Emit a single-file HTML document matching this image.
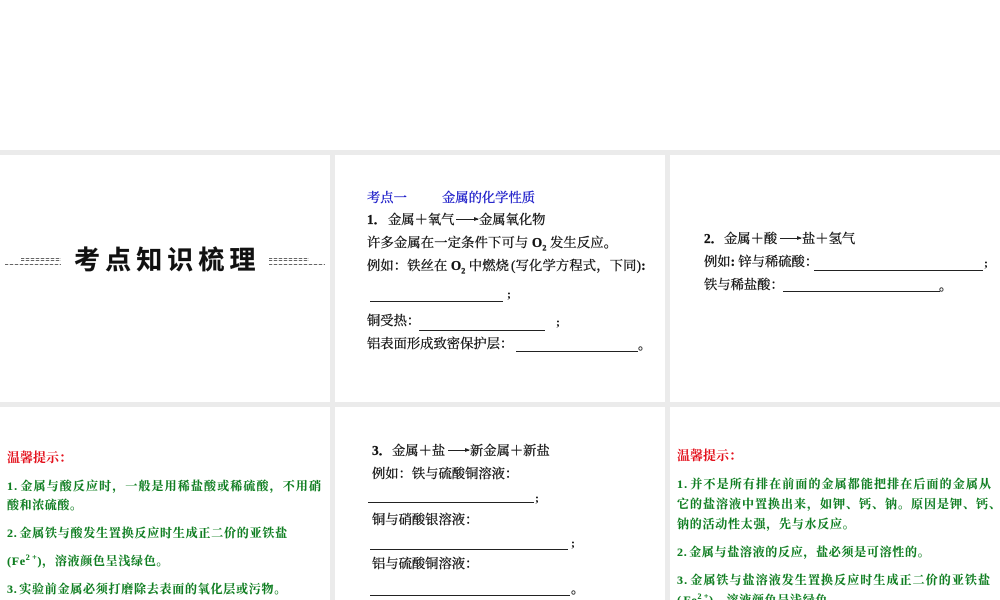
<!DOCTYPE html>
<html lang="zh"><head><meta charset="utf-8">
<style>
html,body{margin:0;padding:0;background:#fff}
#p{position:relative;width:1000px;height:600px;overflow:hidden;background:#fff;font-family:"Liberation Serif","Noto Serif CJK SC",serif;color:#111}
.g{position:absolute;background:#ebebeb}
.t{position:absolute;white-space:nowrap;font-size:13.3px;line-height:18px;height:18px;-webkit-text-stroke:.3px currentColor;margin-top:1px}
.u{position:absolute;height:1px;background:#222}
.a{position:absolute;height:1px;background:#222}
.a:after{content:"";position:absolute;right:-1px;top:-2px;border-left:5px solid #222;border-top:2.5px solid transparent;border-bottom:2.5px solid transparent}
.s{font-weight:bold;font-size:12px;-webkit-text-stroke:0}
.gr{color:#0e7d20;font-weight:bold;font-size:12px;word-spacing:-2px;-webkit-text-stroke:.1px currentColor;margin-top:0}
.r{color:#e3111c;font-weight:bold;font-size:13px;-webkit-text-stroke:0;margin-top:0}
.d{position:absolute;height:1px;background:repeating-linear-gradient(90deg,#666 0 3px,#ddd 3px 5px)}
sub,sup{font-size:8px;line-height:0}
</style></head><body><div id="p">
<div class="g" style="left:0;top:150px;width:1000px;height:5px"></div>
<div class="g" style="left:0;top:402px;width:1000px;height:5px"></div>
<div class="g" style="left:330px;top:150px;width:5px;height:450px"></div>
<div class="g" style="left:665px;top:150px;width:5px;height:450px"></div>

<div class="d" style="left:21px;top:258px;width:40px"></div>
<div class="d" style="left:21px;top:260px;width:40px"></div>
<div class="d" style="left:5px;top:264px;width:56px"></div>
<div class="d" style="left:269px;top:258px;width:40px"></div>
<div class="d" style="left:269px;top:260px;width:40px"></div>
<div class="d" style="left:269px;top:264px;width:56px"></div>
<div class="t" style="left:74px;top:242px;height:34px;line-height:34px;font-family:'Liberation Sans','Noto Sans CJK SC',sans-serif;font-weight:bold;font-size:26px;letter-spacing:5.1px;color:#111;-webkit-text-stroke:.2px #111">考点知识梳理</div>

<div class="t" style="left:367px;top:188px;color:#1a1ac8">考点一</div>
<div class="t" style="left:442px;top:188px;color:#1a1ac8">金属的化学性质</div>
<div class="t" style="left:367px;top:210px;font-weight:bold">1．</div>
<div class="t" style="left:388px;top:210px">金属＋氧气</div>
<div class="a" style="left:456px;top:219px;width:22px"></div>
<div class="t" style="left:479px;top:210px">金属氧化物</div>
<div class="t" style="left:367px;top:233px;letter-spacing:.15px">许多金属在一定条件下可与 <b>O<sub>2</sub></b> 发生反应。</div>
<div class="t" style="left:367px;top:256px;letter-spacing:.1px">例如：铁丝在 <b>O<sub>2</sub></b> 中燃烧</div>
<div class="t" style="left:511px;top:256px;letter-spacing:.15px">(写化学方程式，下同)<b>:</b></div>
<div class="u" style="left:370px;top:301px;width:133px"></div>
<div class="t s" style="left:507px;top:284px">;</div>
<div class="t" style="left:367px;top:311px">铜受热：</div>
<div class="u" style="left:419px;top:330px;width:126px"></div>
<div class="t s" style="left:556px;top:312px">;</div>
<div class="t" style="left:367px;top:334px">铝表面形成致密保护层：</div>
<div class="u" style="left:516px;top:351px;width:122px"></div>
<div class="t" style="left:638px;top:335px">。</div>

<div class="t" style="left:704px;top:229px;font-weight:bold">2．</div>
<div class="t" style="left:724px;top:229px">金属＋酸</div>
<div class="a" style="left:780px;top:238px;width:21px"></div>
<div class="t" style="left:802px;top:229px">盐＋氢气</div>
<div class="t" style="left:704px;top:252px">例如<b>:</b> 锌与稀硫酸：</div>
<div class="u" style="left:814px;top:270px;width:169px"></div>
<div class="t s" style="left:984px;top:253px">;</div>
<div class="t" style="left:704px;top:275px">铁与稀盐酸：</div>
<div class="u" style="left:783px;top:291px;width:157px"></div>
<div class="t" style="left:939px;top:276px">。</div>

<div class="t r" style="left:7px;top:449px">温馨提示：</div>
<div class="t gr" style="left:7px;top:477px;letter-spacing:1.12px">1. 金属与酸反应时，一般是用稀盐酸或稀硫酸，不用硝</div>
<div class="t gr" style="left:7px;top:496px;letter-spacing:.6px">酸和浓硫酸。</div>
<div class="t gr" style="left:7px;top:524px;letter-spacing:.79px">2. 金属铁与酸发生置换反应时生成正二价的亚铁盐</div>
<div class="t gr" style="left:7px;top:552px;letter-spacing:.7px">(Fe<sup>2</sup> <sup>+</sup>)，溶液颜色呈浅绿色。</div>
<div class="t gr" style="left:7px;top:580px;letter-spacing:.75px">3. 实验前金属必须打磨除去表面的氧化层或污物。</div>

<div class="t" style="left:372px;top:441px;font-weight:bold">3．</div>
<div class="t" style="left:392px;top:441px">金属＋盐</div>
<div class="a" style="left:448px;top:450px;width:21px"></div>
<div class="t" style="left:470px;top:441px">新金属＋新盐</div>
<div class="t" style="left:372px;top:464px">例如：铁与硫酸铜溶液：</div>
<div class="u" style="left:368px;top:502px;width:166px"></div>
<div class="t s" style="left:535px;top:488px">;</div>
<div class="t" style="left:372px;top:510px">铜与硝酸银溶液：</div>
<div class="u" style="left:370px;top:549px;width:198px"></div>
<div class="t s" style="left:571px;top:533px">;</div>
<div class="t" style="left:372px;top:554px">铝与硫酸铜溶液：</div>
<div class="u" style="left:370px;top:595px;width:200px"></div>
<div class="t" style="left:571px;top:579px">。</div>

<div class="t r" style="left:677px;top:447px">温馨提示：</div>
<div class="t gr" style="left:677px;top:475px;letter-spacing:1.12px">1. 并不是所有排在前面的金属都能把排在后面的金属从</div>
<div class="t gr" style="left:677px;top:495px;letter-spacing:1px">它的盐溶液中置换出来，如钾、钙、钠。原因是钾、钙、</div>
<div class="t gr" style="left:677px;top:515px;letter-spacing:.75px">钠的活动性太强，先与水反应。</div>
<div class="t gr" style="left:677px;top:543px;letter-spacing:.7px">2. 金属与盐溶液的反应，盐必须是可溶性的。</div>
<div class="t gr" style="left:677px;top:571px;letter-spacing:1.08px">3. 金属铁与盐溶液发生置换反应时生成正二价的亚铁盐</div>
<div class="t gr" style="left:677px;top:591px;letter-spacing:.7px">( Fe<sup>2</sup> <sup>+</sup>)，溶液颜色呈浅绿色。</div>
</div></body></html>
